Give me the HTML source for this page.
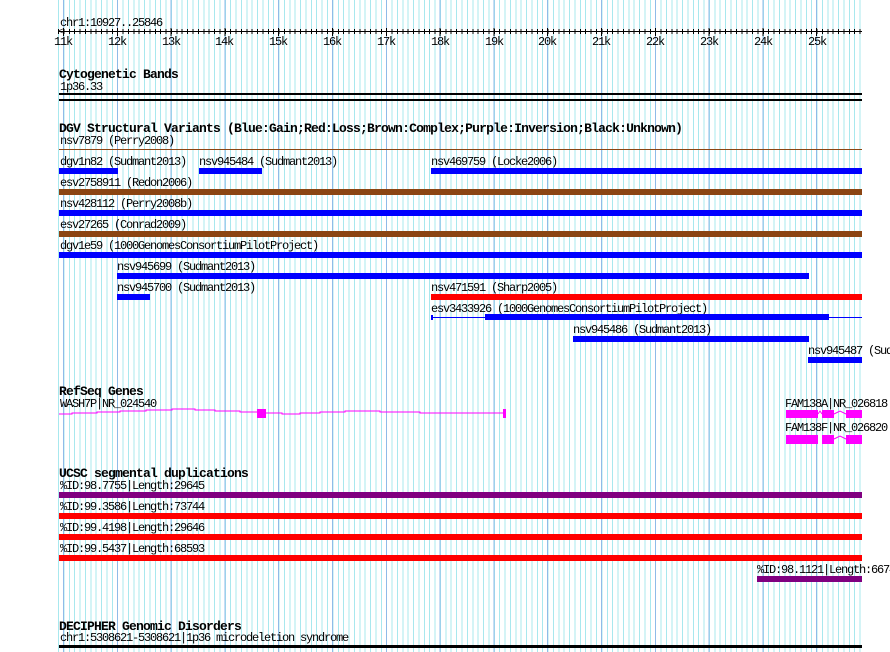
<!DOCTYPE html>
<html style="overflow:hidden"><head><meta charset="utf-8"><style>
*{margin:0;padding:0}
html,body{width:890px;height:652px;overflow:hidden}
body{background:#fff;position:relative;font-family:"Liberation Mono",monospace}
.g{position:absolute;top:0;height:652px}
.t{position:absolute;font-size:12px;line-height:12px;letter-spacing:-1.2px;color:#000;white-space:nowrap;overflow:visible}
.h{position:absolute;font-size:13px;line-height:13px;font-weight:bold;letter-spacing:-0.8px;color:#000;white-space:nowrap}
.b{position:absolute;height:6px}
.bl{background:#0000ff}.br{background:#8b4513}.rd{background:#ff0000}.pu{background:#800080}.mg{background:#ff00ff}
.lab{position:absolute;top:36px;font-size:12px;line-height:12px;letter-spacing:-1.2px;width:30px;text-align:center}
</style></head><body>
<div class="g" style="left:57.5px;width:805px;background:repeating-linear-gradient(90deg,#a8e8ee 0,#a8e8ee 1px,transparent 1px,transparent 5.38px)"></div>
<div class="g" style="left:62.9px;width:800px;background:repeating-linear-gradient(90deg,#8fbbe8 0,#8fbbe8 1px,transparent 1px,transparent 53.8px)"></div>

<div class="t" style="left:60px;top:17px">chr1:10927..25846</div>
<div style="position:absolute;left:59px;top:31px;width:803px;height:1px;background:#000"></div>
<div style="position:absolute;left:57.5px;top:29px;width:805px;height:5px;background:repeating-linear-gradient(90deg,#000 0,#000 1px,transparent 1px,transparent 5.38px)"></div>
<div style="position:absolute;left:62.9px;top:28px;width:800px;height:8px;background:repeating-linear-gradient(90deg,#000 0,#000 1px,transparent 1px,transparent 53.8px)"></div>
<div class="t" style="left:58px;top:26px;font-size:9px">&lt;</div>
<div class="lab" style="left:48px">11k</div><div class="lab" style="left:102px">12k</div><div class="lab" style="left:156px">13k</div><div class="lab" style="left:209px">14k</div><div class="lab" style="left:263px">15k</div><div class="lab" style="left:317px">16k</div><div class="lab" style="left:371px">17k</div><div class="lab" style="left:425px">18k</div><div class="lab" style="left:479px">19k</div><div class="lab" style="left:532px">20k</div><div class="lab" style="left:586px">21k</div><div class="lab" style="left:640px">22k</div><div class="lab" style="left:694px">23k</div><div class="lab" style="left:748px">24k</div><div class="lab" style="left:802px">25k</div>

<div class="h" style="left:59px;top:68px">Cytogenetic Bands</div>
<div class="t" style="left:60px;top:81px">1p36.33</div>
<div style="position:absolute;left:59px;top:93px;width:803px;height:2px;background:#000"></div>
<div style="position:absolute;left:59px;top:99px;width:803px;height:2px;background:#000"></div>

<div class="h" style="left:59px;top:122px">DGV Structural Variants (Blue:Gain;Red:Loss;Brown:Complex;Purple:Inversion;Black:Unknown)</div>
<div class="t" style="left:60px;top:135px">nsv7879 (Perry2008)</div>
<div style="position:absolute;left:59px;top:149px;width:803px;height:1px;background:#8b4513"></div>

<div class="t" style="left:60px;top:156px">dgv1n82 (Sudmant2013)</div><div class="b bl" style="left:59px;top:168px;width:59px"></div>
<div class="t" style="left:199px;top:156px">nsv945484 (Sudmant2013)</div><div class="b bl" style="left:199px;top:168px;width:63px"></div>
<div class="t" style="left:431px;top:156px">nsv469759 (Locke2006)</div><div class="b bl" style="left:431px;top:168px;width:431px"></div>

<div class="t" style="left:60px;top:177px">esv2758911 (Redon2006)</div><div class="b br" style="left:59px;top:189px;width:803px"></div>
<div class="t" style="left:60px;top:198px">nsv428112 (Perry2008b)</div><div class="b bl" style="left:59px;top:210px;width:803px"></div>
<div class="t" style="left:60px;top:219px">esv27265 (Conrad2009)</div><div class="b br" style="left:59px;top:231px;width:803px"></div>
<div class="t" style="left:60px;top:240px">dgv1e59 (1000GenomesConsortiumPilotProject)</div><div class="b bl" style="left:59px;top:252px;width:803px"></div>
<div class="t" style="left:117px;top:261px">nsv945699 (Sudmant2013)</div><div class="b bl" style="left:117px;top:273px;width:692px"></div>
<div class="t" style="left:117px;top:282px">nsv945700 (Sudmant2013)</div><div class="b bl" style="left:117px;top:294px;width:33px"></div>
<div class="t" style="left:431px;top:282px">nsv471591 (Sharp2005)</div><div class="b rd" style="left:431px;top:294px;width:431px"></div>
<div class="t" style="left:431px;top:303px">esv3433926 (1000GenomesConsortiumPilotProject)</div>
<div style="position:absolute;left:431px;top:317px;width:431px;height:1px;background:#0000ff"></div>
<div style="position:absolute;left:431px;top:315px;width:2px;height:5px;background:#0000ff"></div>
<div class="b bl" style="left:485px;top:314px;width:344px"></div>
<div class="t" style="left:573px;top:324px">nsv945486 (Sudmant2013)</div><div class="b bl" style="left:573px;top:336px;width:236px"></div>
<div class="t" style="left:808px;top:345px">nsv945487 (Sudmant2013)</div><div class="b bl" style="left:808px;top:357px;width:54px"></div>

<div class="h" style="left:59px;top:385px">RefSeq Genes</div>
<div class="t" style="left:60px;top:398px">WASH7P|NR_024540</div>
<svg style="position:absolute;left:0;top:0" width="890" height="652">
<polyline points="59,414 72,414 72,413 97,413 97,412 120,412 120,411 146,411 146,410 172,410 172,409 195,409 195,410 215,410 215,411 240,411 240,412 265,412 265,413 282,413 282,414 300,414 300,413 320,413 320,412 345,412 345,411 380,411 380,412 420,412 420,413 504,413" fill="none" stroke="#ff00ff" stroke-width="1"/>
<rect x="257" y="409" width="9" height="9" fill="#ff00ff"/>
<rect x="503" y="409" width="3" height="9" fill="#ff00ff"/>
<rect x="786" y="410" width="32" height="8" fill="#ff00ff"/>
<rect x="822" y="410" width="12" height="8" fill="#ff00ff"/>
<rect x="846" y="410" width="16" height="8" fill="#ff00ff"/>
<polyline points="818,414 820,411 822,414" fill="none" stroke="#ff00ff"/>
<polyline points="834,414 840,411 846,414" fill="none" stroke="#ff00ff"/>
<rect x="786" y="435" width="32" height="9" fill="#ff00ff"/>
<rect x="822" y="435" width="12" height="9" fill="#ff00ff"/>
<rect x="846" y="435" width="16" height="9" fill="#ff00ff"/>
<polyline points="834,439 840,436 846,439" fill="none" stroke="#ff00ff"/>
</svg>
<div class="t" style="left:785px;top:398px">FAM138A|NR_026818</div>
<div class="t" style="left:785px;top:422px">FAM138F|NR_026820</div>

<div class="h" style="left:59px;top:467px">UCSC segmental duplications</div>
<div class="t" style="left:60px;top:480px">%ID:98.7755|Length:29645</div><div class="b pu" style="left:59px;top:492px;width:803px"></div>
<div class="t" style="left:60px;top:501px">%ID:99.3586|Length:73744</div><div class="b rd" style="left:59px;top:513px;width:803px"></div>
<div class="t" style="left:60px;top:522px">%ID:99.4198|Length:29646</div><div class="b rd" style="left:59px;top:534px;width:803px"></div>
<div class="t" style="left:60px;top:543px">%ID:99.5437|Length:68593</div><div class="b rd" style="left:59px;top:555px;width:803px"></div>
<div class="t" style="left:757px;top:564px">%ID:98.1121|Length:66748</div><div class="b pu" style="left:757px;top:576px;width:105px"></div>

<div class="h" style="left:59px;top:620px">DECIPHER Genomic Disorders</div>
<div class="t" style="left:60px;top:632px">chr1:5308621-5308621|1p36 microdeletion syndrome</div>
<div style="position:absolute;left:59px;top:645px;width:803px;height:3px;background:#000"></div>
</body></html>
